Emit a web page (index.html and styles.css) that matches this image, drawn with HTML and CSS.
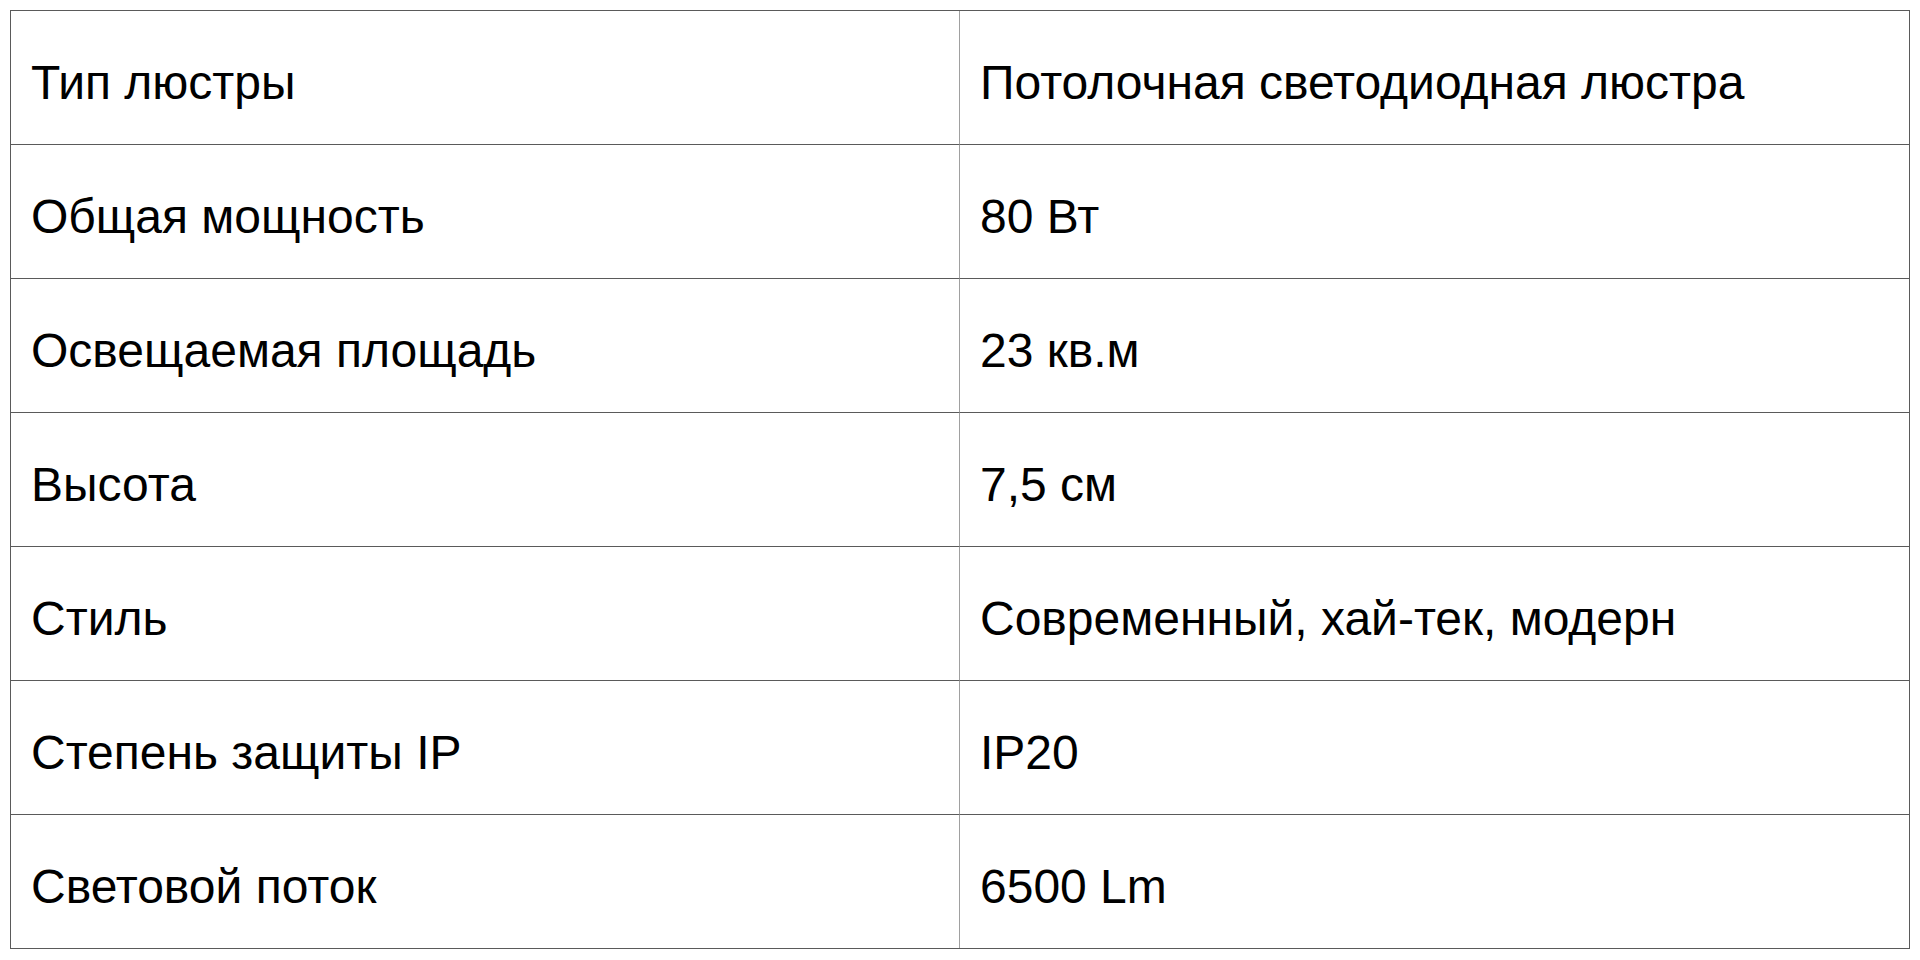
FILE: index.html
```html
<!DOCTYPE html>
<html lang="ru">
<head>
<meta charset="utf-8">
<title>Характеристики люстры</title>
<link rel="stylesheet" href="styles.css">
</head>
<body>
<div class="specs">
  <div class="cell key">Тип люстры</div>
  <div class="cell val">Потолочная светодиодная люстра</div>
  <div class="cell key">Общая мощность</div>
  <div class="cell val">80 Вт</div>
  <div class="cell key">Освещаемая площадь</div>
  <div class="cell val">23 кв.м</div>
  <div class="cell key">Высота</div>
  <div class="cell val">7,5 см</div>
  <div class="cell key">Стиль</div>
  <div class="cell val">Современный, хай-тек, модерн</div>
  <div class="cell key">Степень защиты IP</div>
  <div class="cell val">IP20</div>
  <div class="cell key last">Световой поток</div>
  <div class="cell val last">6500 Lm</div>
</div>
</body>
</html>
```
FILE: styles.css
```css
html, body {
  margin: 0;
  padding: 0;
  background: #ffffff;
}
body {
  padding: 10px;
  font-family: "Liberation Sans", Arial, sans-serif;
  color: #000000;
}
.specs {
  width: 1900px;
  box-sizing: border-box;
  border: 1px solid #5a5a5a;
  display: grid;
  grid-template-columns: 949px 1fr;
}
.cell {
  box-sizing: border-box;
  height: 134px;
  border-bottom: 1px solid #5a5a5a;
  padding: 44px 20px 0;
  font-size: 48px;
  line-height: 55px;
  white-space: nowrap;
}
.cell.key {
  border-right: 1px solid #a0a0a0;
}
.cell.val {
  padding-left: 20px;
}
.cell.last {
  height: 133px;
  border-bottom: none;
}
```
